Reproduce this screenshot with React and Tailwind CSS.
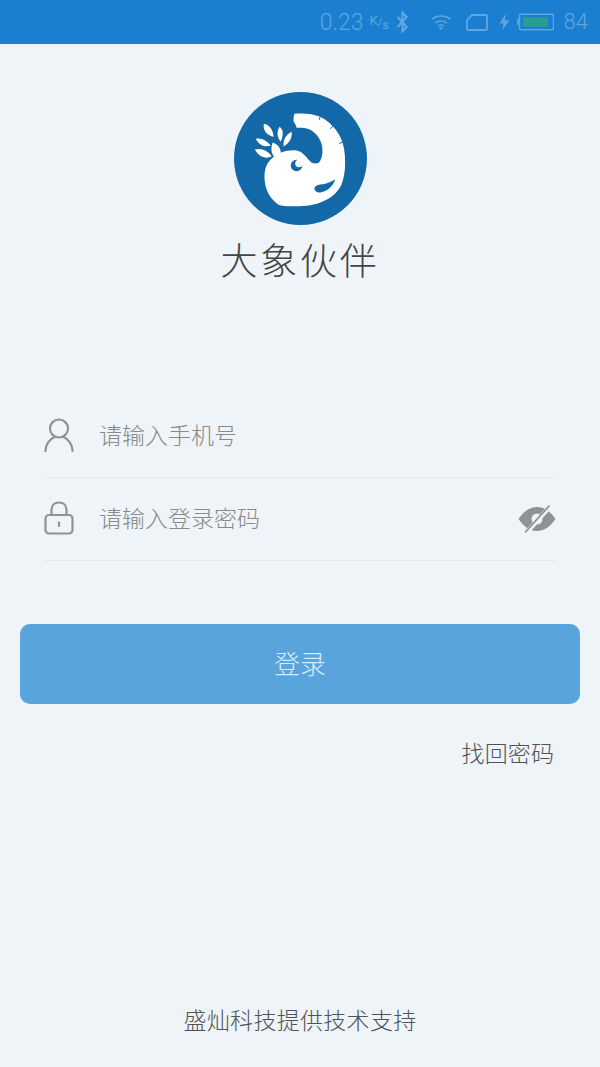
const cjk = "font-['Noto_Sans_CJK_SC','Noto_Sans',sans-serif]";

function Logo() {
  return (
    <svg width="133" height="133" viewBox="0 0 134 134">
      <circle cx="67" cy="67" r="67" fill="#1368a8" />
      {/* elephant */}
      <path
        d="M61 22C70 21 80 22 87 25C100 32 109 44 111 58C113 72 112 84 108 94C103 103 97 107 90 110C82 114 72 115 62 115C54 115 48 115 44 113C37 108 32 100 31 90C30 80 32 73 37 68C44 61 54 58 63 59C70 60 74 68 78 71C82 73 86 72 87 69C90 63 90 54 86 47C82 40 75 36 68 36C65 36 63 36 63 36C63 33 60 31 60 29C60 26 60 24 61 22Z"
        fill="#fff"
      />
      {/* trunk notches */}
      <path d="M87 24L86 28M100 34L97 37M110 50L106 52" stroke="#1368a8" strokeWidth="1" />
      {/* eye */}
      <circle cx="63" cy="74" r="5.8" fill="#1368a8" />
      <circle cx="65.5" cy="72" r="3.8" fill="#fff" />
      {/* mouth */}
      <path d="M81 97C82 94 86 93 90 93C95 92 99 90 102 88C100 94 95 100 88 101C84 102 81 100 81 97Z" fill="#1368a8" />
      {/* leaves */}
      <g fill="#fff">
        <path d="M30 32C36 33 39 38 40 45C34 44 29 40 30 32Z" />
        <path d="M46 35C50 38 50 44 47 50C43 45 43 40 46 35Z" />
        <path d="M58 40C59 46 56 51 50 55C49 49 52 43 58 40Z" />
        <path d="M22 47C28 46 33 49 37 54C30 56 25 53 22 47Z" />
        <path d="M21 58C28 56 35 60 38 65C31 68 25 65 21 58Z" />
        <path d="M39 51C45 53 48 58 47 64C45 66 43 66 41 66C37 62 37 56 39 51Z" />
      </g>
    </svg>
  );
}

function UserIcon() {
  return (
    <svg width="30" height="34" viewBox="0 0 30 34" fill="none" stroke="#8e9294" strokeWidth="2.2" strokeLinecap="round">
      <circle cx="15" cy="10.5" r="9" />
      <path d="M1.5 33C1.5 26 6 21 10.5 19M28.5 33C28.5 26 24 21 19.5 19" />
    </svg>
  );
}

function LockIcon() {
  return (
    <svg width="30" height="34" viewBox="0 0 30 34" fill="none" stroke="#8e9294" strokeWidth="2.2" strokeLinecap="round">
      <rect x="1.5" y="14" width="27" height="18.5" rx="3.5" />
      <path d="M7.5 14V9C7.5 4.5 10.5 1.5 15 1.5C19.5 1.5 22.5 4.5 22.5 9V14" />
      <path d="M15 21.5V25" />
    </svg>
  );
}

function EyeOffIcon() {
  return (
    <svg width="38" height="30" viewBox="0 0 38 30">
      <path
        fillRule="evenodd"
        d="M0.5 15C6 7 12 3 19 3C26 3 32 7 37.5 15C32 23 26 27 19 27C12 27 6 23 0.5 15ZM19 9.5A5.5 5.5 0 1 0 19 20.5A5.5 5.5 0 1 0 19 9.5Z"
        fill="#8e9294"
      />
      <path d="M8.5 28.5L32 2.5" stroke="#eff4f8" strokeWidth="4.5" />
      <path d="M7 28.5L31.5 1.5" stroke="#8e9294" strokeWidth="1.8" />
    </svg>
  );
}

function StatusBar() {
  const c = "#5fa6df";
  return (
    <div className="h-11 bg-[#1a7fd1] flex items-center justify-end pr-[12px] text-[#5fa6df] font-['Roboto',sans-serif]">
      <span className="text-[23px] font-light leading-none">0.23</span>
      <span className="flex h-[17px] w-[16px] ml-[6px] mr-[10px] text-[13px] leading-none">
        <span className="self-start">K</span>
        <span className="self-center text-[11px]">/</span>
        <span className="self-end">s</span>
      </span>
      <svg width="13" height="22" viewBox="0 0 16 22" preserveAspectRatio="none" fill="none" stroke={c} strokeWidth="2.4">
        <path d="M2 6L13 16L8 20.5V1.5L13 6L2 16" />
      </svg>
      <svg className="ml-[22px]" width="20" height="19" viewBox="0 0 24 20" fill="none" stroke={c} strokeWidth="1.8">
        <path d="M1 6C7 1 17 1 23 6M5 10.5C9 7.5 15 7.5 19 10.5M8.5 14C10.5 12.8 13.5 12.8 15.5 14" />
        <path d="M12 19L9.5 16C11 15 13 15 14.5 16Z" fill={c} stroke="none" />
      </svg>
      <svg className="ml-[15px]" width="22" height="17" viewBox="0 0 22 17" fill="none" stroke={c} strokeWidth="1.8">
        <path d="M6 1H20C20.6 1 21 1.4 21 2V15C21 15.6 20.6 16 20 16H2C1.4 16 1 15.6 1 15V6Z" />
      </svg>
      <svg className="ml-[11px]" width="11" height="18" viewBox="0 0 12 18">
        <path d="M7.5 0L0.5 10.5H5L3.5 18L11.5 7H6.5Z" fill={c} />
      </svg>
      <svg className="ml-[7px]" width="37" height="18" viewBox="0 0 38 18">
        <rect x="0" y="6" width="1.6" height="6" fill={c} />
        <rect x="2.5" y="1" width="35" height="16" rx="2" fill="none" stroke={c} strokeWidth="1.6" />
        <rect x="6" y="4" width="26" height="10" fill="#2a9d90" />
      </svg>
      <span className="text-[22px] font-light leading-none ml-[10px]">84</span>
    </div>
  );
}

function Field({ icon, placeholder, right }) {
  return (
    <div className="h-[83px] mx-[44px] border-b border-[#e3e8ec] flex items-center">
      <div className="w-[30px] flex justify-center mt-[-2px]">{icon}</div>
      <span className={`${cjk} ml-[25px] text-[23px] leading-none font-light text-[#87898b] flex-1 mt-[-4px]`}>{placeholder}</span>
      {right}
    </div>
  );
}

export default function App() {
  return (
    <div className={`w-[600px] h-[1067px] bg-[#eff4f8] flex flex-col ${cjk}`}>
      <StatusBar />
      <div className="flex flex-col items-center pt-[48px]">
        <Logo />
        <div className="mt-[9px] text-[37px] leading-[50px] tracking-[2.7px] font-extralight text-[#444]">大象伙伴</div>
      </div>
      <div className="mt-[111px]">
        <Field icon={<UserIcon />} placeholder="请输入手机号" />
        <Field icon={<LockIcon />} placeholder="请输入登录密码" right={<EyeOffIcon />} />
      </div>
      <button className="mx-[20px] mt-[63px] h-[80px] pb-[4px] rounded-[10px] bg-[#5aa4de] text-[26px] font-light text-[#d3ecfa]">登录</button>
      <div className="mt-[32px] pr-[46px] text-right text-[23px] tracking-[0.1px] leading-[32px] font-light text-[#4f5355]">找回密码</div>
      <div className="mt-auto pb-[32px] text-center text-[23px] tracking-[0.3px] leading-[32px] font-light text-[#4f5355]">盛灿科技提供技术支持</div>
    </div>
  );
}
